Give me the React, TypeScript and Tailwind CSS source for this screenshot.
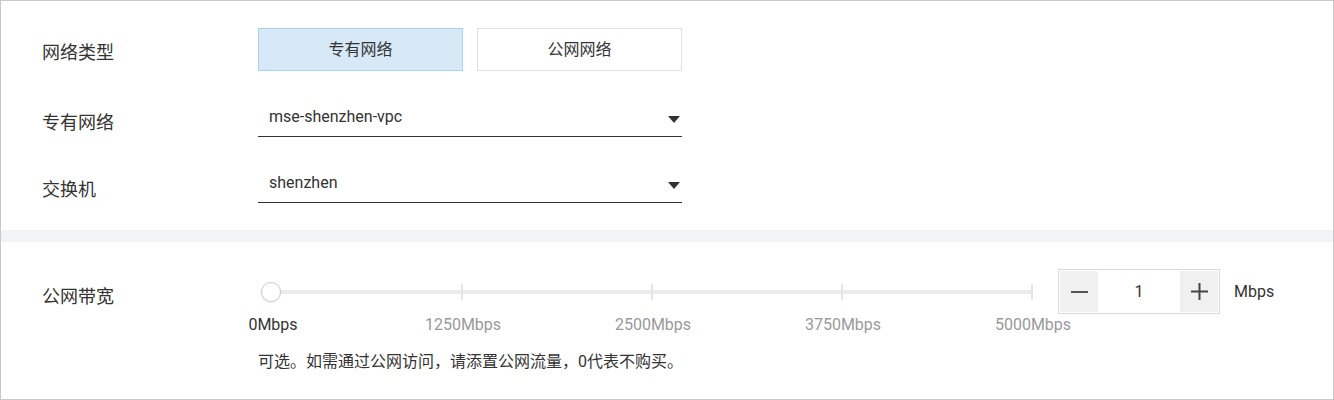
import { useState } from "react";

const font = "font-['Roboto','Noto_Sans_CJK_SC',sans-serif]";

function Label({ text, className }: { text: string; className: string }) {
  return (
    <div className={`w-[216px] shrink-0 text-[18px] leading-[24px] text-[#333] ${className}`}>
      {text}
    </div>
  );
}

function Select({ value }: { value: string }) {
  return (
    <div className="relative w-[424px] border-b border-[#333] pt-[5px] pb-[7px] pl-[11px]">
      <span className="text-[16px] leading-[24px] text-[#333]">{value}</span>
      <svg
        className="absolute right-[2px] top-[16px]"
        width="12"
        height="7"
        viewBox="0 0 12 7"
      >
        <path d="M0 0H12L6 7Z" fill="#333" />
      </svg>
    </div>
  );
}

export default function App() {
  const [netType, setNetType] = useState("vpc");
  const [bandwidth, setBandwidth] = useState(1);
  const marks = ["0Mbps", "1250Mbps", "2500Mbps", "3750Mbps", "5000Mbps"];

  return (
    <div className={`w-[1334px] h-[400px] border border-[#c8c8c8] bg-white ${font}`}>
      {/* network section */}
      <div className="pt-[27px] pb-[27px] pl-[41px]">
        <div className="flex items-start">
          <Label text="网络类型" className="mt-[13px]" />
          <div className="flex gap-[14px]">
            {[
              { key: "vpc", text: "专有网络" },
              { key: "public", text: "公网网络" },
            ].map((opt) => (
              <button
                key={opt.key}
                onClick={() => setNetType(opt.key)}
                className={`w-[205px] h-[43px] border text-[16px] text-[#333] ${
                  netType === opt.key
                    ? "bg-[#d7e9f7] border-[#a9d1f2]"
                    : "bg-white border-[#e0e0e0]"
                }`}
              >
                {opt.text}
              </button>
            ))}
          </div>
        </div>

        <div className="flex items-start mt-[29px]">
          <Label text="专有网络" className="mt-[11px]" />
          <Select value="mse-shenzhen-vpc" />
        </div>

        <div className="flex items-start mt-[29px]">
          <Label text="交换机" className="mt-[12px]" />
          <Select value="shenzhen" />
        </div>
      </div>

      <div className="h-[12px] bg-[#f2f3f5]" />

      {/* bandwidth section */}
      <div className="pt-[27px] pl-[41px]">
        <div className="flex items-start">
          <Label text="公网带宽" className="mt-[16px]" />
          <div>
            <div className="flex items-start">
              <div className="ml-[3px] w-[780px] flex flex-col">
                <div className="h-[45px] flex items-center">
                  <div className="relative w-full h-[20px]">
                    <div className="absolute left-[10px] right-[9px] top-[8px] h-[4px] bg-[#ebebeb]" />
                    {[1, 2, 3, 4].map((i) => (
                      <div
                        key={i}
                        className="absolute top-[2px] w-[2px] h-[16px] bg-[#e4e4e4]"
                        style={{ left: 10 + i * 190 }}
                      />
                    ))}
                    <div className="absolute left-0 top-0 w-[20px] h-[20px] rounded-full bg-white border border-[#c9c9d6] shadow-[0_1px_2px_rgba(0,0,0,0.08)]" />
                  </div>
                </div>
                <div className="-ml-[38px] -mr-[42px] mt-px flex justify-between">
                  {marks.map((m, i) => (
                    <div
                      key={m}
                      className={`w-[100px] text-center text-[16px] leading-[20px] ${
                        i === 0 ? "text-[#333]" : "text-[#999]"
                      }`}
                    >
                      {m}
                    </div>
                  ))}
                </div>
              </div>

              <div className="ml-[17px] flex h-[45px] w-[162px] border border-[#d9d9d9] p-px">
                <button
                  onClick={() => setBandwidth((b) => Math.max(0, b - 1))}
                  className="w-[38px] h-full bg-[#f0f0f0] flex items-center justify-center"
                >
                  <span className="block w-[17px] h-[2px] bg-[#555]" />
                </button>
                <div className="flex-1 flex items-center justify-center text-[16px] text-[#333]">
                  {bandwidth}
                </div>
                <button
                  onClick={() => setBandwidth((b) => Math.min(5000, b + 1))}
                  className="w-[38px] h-full bg-[#f0f0f0] flex items-center justify-center"
                >
                  <svg width="17" height="17" viewBox="0 0 17 17">
                    <path d="M0 8.5H17M8.5 0V17" stroke="#444" strokeWidth="2" />
                  </svg>
                </button>
              </div>

              <div className="ml-[14px] h-[45px] flex items-center text-[16px] text-[#333]">
                Mbps
              </div>
            </div>

            <div className="mt-[17px] text-[16px] leading-[20px] text-[#333]">
              可选。如需通过公网访问，请添置公网流量，0代表不购买。
            </div>
          </div>
        </div>
      </div>
    </div>
  );
}
